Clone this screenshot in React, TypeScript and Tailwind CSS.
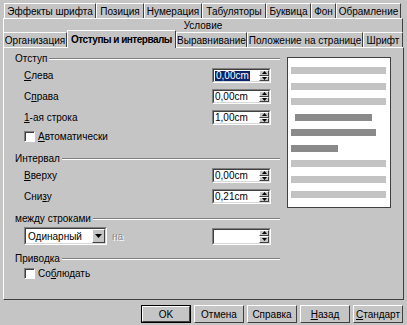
const raised = "border border-t-white border-l-white border-r-[#404040] border-b-[#404040]";

const Tab = ({ w, children, active = false }: { w: string; children: React.ReactNode; active?: boolean }) => (
  <div
    className={`${w} flex items-center justify-center shrink-0 border-t border-l border-t-white border-l-white border-r border-r-[#404040] ${
      active ? "h-[18px] -mb-[1px] relative z-10 bg-[#c6c5c6] font-bold tracking-[-0.5px]" : "h-[15px]"
    }`}
  >
    <span className="whitespace-nowrap">{children}</span>
  </div>
);

const Header = ({ children }: { children: React.ReactNode }) => (
  <div className="flex items-center h-[13px]">
    <span className="whitespace-nowrap">{children}</span>
    <div className="flex-1 ml-[2px] h-[2px] border-t border-t-[#808080] border-b border-b-white" />
  </div>
);

const Arrow = ({ up }: { up?: boolean }) => (
  <svg width="5" height="3" viewBox="0 0 5 3">
    {up ? <path d="M0 3 L2.5 0 L5 3 Z" fill="#000" /> : <path d="M0 0 L2.5 3 L5 0 Z" fill="#000" />}
  </svg>
);

const SpinField = ({ value, selected = false, h = "h-[15px]" }: { value: string; selected?: boolean; h?: string }) => (
  <div className={`w-[59px] ${h} border border-t-[#808080] border-l-[#808080] border-b-white border-r-white`}>
    <div className="w-full h-full flex bg-white border border-t-[#404040] border-l-[#404040] border-b-[#d8d8d8] border-r-[#d8d8d8]">
      <div className="flex-1 flex items-center pl-[1px] leading-none">
        {value && (
          <span className={selected ? "bg-[#0a246a] text-white px-[1px]" : ""}>{value}</span>
        )}
      </div>
      <div className="w-[10px] flex flex-col bg-[#c6c5c6]">
        <div className={`flex-1 flex items-center justify-center ${raised}`}>
          <Arrow up />
        </div>
        <div className={`flex-1 flex items-center justify-center ${raised}`}>
          <Arrow />
        </div>
      </div>
    </div>
  </div>
);

const Row = ({ label, children }: { label: React.ReactNode; children: React.ReactNode }) => (
  <div className="flex items-center h-[21px] pl-[9px]">
    <div className="w-[188px]">{label}</div>
    {children}
  </div>
);

const Check = ({ children }: { children: React.ReactNode }) => (
  <div className="flex items-center h-[16px] pl-[9px]">
    <div className="w-[11px] h-[11px] bg-white border border-t-[#808080] border-l-[#808080] border-b-white border-r-white shadow-[inset_1px_1px_0_#404040]" />
    <span className="ml-[3px]">{children}</span>
  </div>
);

const Btn = ({ children, def = false }: { children: React.ReactNode; def?: boolean }) => (
  <div className={`w-[50px] h-[18px] ${def ? "border border-black" : ""}`}>
    <div className={`w-full h-full flex items-center justify-center ${raised}`}>{children}</div>
  </div>
);

const PreviewLine = ({ c, ml = "ml-0", w = "w-[95px]" }: { c: string; ml?: string; w?: string }) => (
  <div className={`h-[7px] ${w} ${ml} ${c}`} />
);

export default function App() {
  return (
    <div
      className="w-[407px] h-[325px] bg-[#c6c5c6] text-black text-[10px] flex flex-col pt-[3px] overflow-hidden"
      style={{ fontFamily: '"Liberation Sans", Arial, sans-serif' }}
    >
      {/* tabs row 1 */}
      <div className="flex pl-[4px]">
        <Tab w="w-[92px]">Эффекты шрифта</Tab>
        <Tab w="w-[48px]">Позиция</Tab>
        <Tab w="w-[58px]">Нумерация</Tab>
        <Tab w="w-[64px]">Табуляторы</Tab>
        <Tab w="w-[45px]">Буквица</Tab>
        <Tab w="w-[25px]">Фон</Tab>
        <Tab w="w-[65px]">Обрамление</Tab>
      </div>
      {/* tabs row 2 */}
      <div className="flex pl-[3px]">
        <div className="w-[400px] h-[14px] flex items-center justify-center border-t border-l border-t-white border-l-white border-r border-r-[#404040]">
          Условие
        </div>
      </div>
      {/* tabs row 3 */}
      <div className="flex items-end h-[15px] pl-[3px]">
        <Tab w="w-[64px]">Организация</Tab>
        <Tab w="w-[109px]" active>
          Отступы и интервалы
        </Tab>
        <Tab w="w-[71px]">Выравнивание</Tab>
        <Tab w="w-[116px]">Положение на странице</Tab>
        <Tab w="w-[40px]">Шрифт</Tab>
      </div>

      {/* panel */}
      <div className="ml-[3px] w-[401px] h-[253px] flex border border-t-white border-l-white border-r-[#404040] border-b-[#404040]">
        <div className="w-[276px] pl-[11px] pt-[4px] flex flex-col">
          <Header>Отступ</Header>
          <Row
            label={
              <span>
                <u>С</u>лева
              </span>
            }
          >
            <SpinField value="0,00cm" selected />
          </Row>
          <Row
            label={
              <span>
                С<u>п</u>рава
              </span>
            }
          >
            <SpinField value="0,00cm" />
          </Row>
          <Row
            label={
              <span>
                <u>1</u>-ая строка
              </span>
            }
          >
            <SpinField value="1,00cm" />
          </Row>
          <Check>
            <u>А</u>втоматически
          </Check>

          <div className="mt-[8px]">
            <Header>Интервал</Header>
          </div>
          <Row
            label={
              <span>
                <u>В</u>верху
              </span>
            }
          >
            <SpinField value="0,00cm" />
          </Row>
          <Row
            label={
              <span>
                Сни<u>з</u>у
              </span>
            }
          >
            <SpinField value="0,21cm" />
          </Row>

          <div className="mt-[5px]">
            <Header>между строками</Header>
          </div>
          <div className="flex items-center h-[20px] mt-[1px] pl-[9px]">
            <div className="w-[83px] h-[18px] border border-t-[#808080] border-l-[#808080] border-b-white border-r-white">
              <div className="w-full h-full flex bg-white border border-t-[#404040] border-l-[#404040] border-b-[#d8d8d8] border-r-[#d8d8d8]">
                <div className="flex-1 flex items-center pl-[2px]">Одинарный</div>
                <div className={`w-[13px] flex items-center justify-center bg-[#c6c5c6] ${raised}`}>
                  <svg width="7" height="4" viewBox="0 0 7 4">
                    <path d="M0 0 L3.5 4 L7 0 Z" fill="#000" />
                  </svg>
                </div>
              </div>
            </div>
            <span className="ml-[5px] w-[100px] text-[#8c8c8c] [text-shadow:1px_1px_0_#fff]">на</span>
            <SpinField value="" h="h-[17px]" />
          </div>

          <div className="mt-[6px]">
            <Header>Приводка</Header>
          </div>
          <Check>
            Со<u>б</u>людать
          </Check>
        </div>

        {/* preview */}
        <div className="ml-[7px] mt-[9px]">
          <div className="w-[104px] h-[151px] bg-white border border-[#404040] pl-[3px] pt-[9px] flex flex-col gap-[8.5px]">
            <PreviewLine c="bg-[#c3c3c3]" />
            <PreviewLine c="bg-[#c3c3c3]" />
            <PreviewLine c="bg-[#c3c3c3]" />
            <PreviewLine c="bg-[#8a8a8a]" ml="ml-[4px]" w="w-[77px]" />
            <PreviewLine c="bg-[#8a8a8a]" w="w-[85px]" />
            <PreviewLine c="bg-[#8a8a8a]" w="w-[47px]" />
            <PreviewLine c="bg-[#c3c3c3]" />
            <PreviewLine c="bg-[#c3c3c3]" />
            <PreviewLine c="bg-[#c3c3c3]" />
          </div>
        </div>
      </div>

      {/* buttons */}
      <div className="flex justify-end gap-[3px] pr-[4px] mt-[5px]">
        <Btn def>OK</Btn>
        <Btn>Отмена</Btn>
        <Btn>Справка</Btn>
        <Btn>
          <span>
            <u>Н</u>азад
          </span>
        </Btn>
        <Btn>
          <span>
            <u>С</u>тандарт
          </span>
        </Btn>
      </div>
    </div>
  );
}
